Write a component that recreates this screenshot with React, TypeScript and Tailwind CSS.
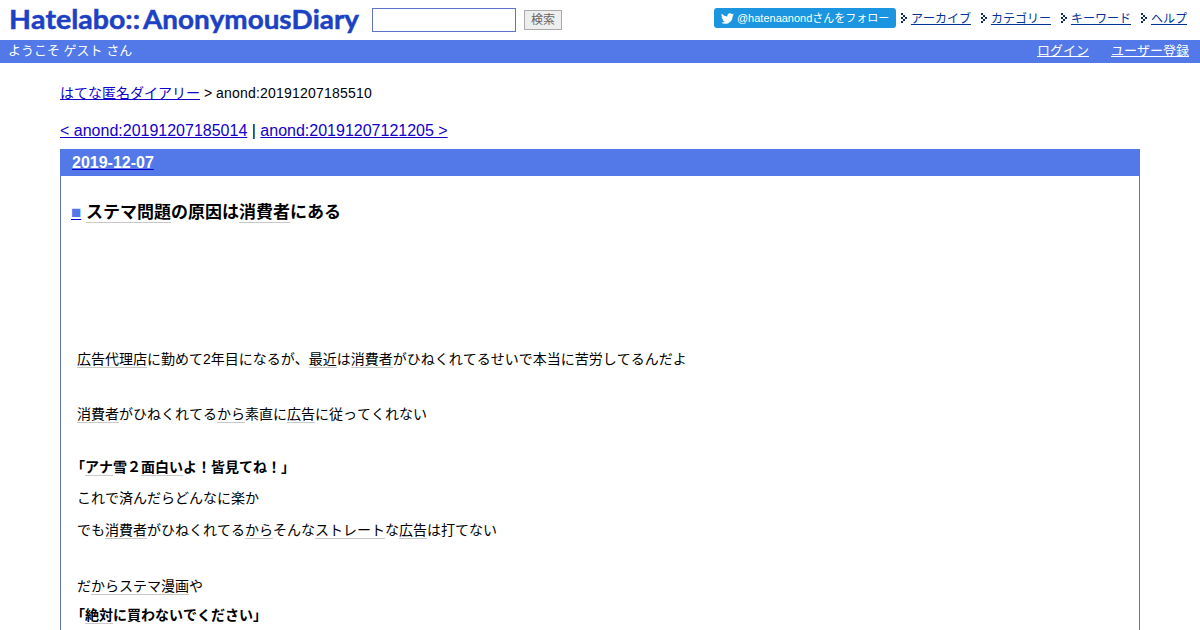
import type { ReactNode } from "react";

function K({ children }: { children: ReactNode }) {
  return <span className="border-b border-[#c8c8c8] inline-block h-[17px] leading-[17px]">{children}</span>;
}

function Arrow() {
  return (
    <svg width="6" height="10" viewBox="0 0 6 10" shapeRendering="crispEdges" fill="#0b2b66" className="mr-1 shrink-0">
      <path d="M0 0h2v2h-2zM2 2h2v2h-2zM4 4h2v2h-2zM2 6h2v2h-2zM0 8h2v2h-2zM0 4h2v2h-2z" />
    </svg>
  );
}

const menu = ["アーカイブ", "カテゴリー", "キーワード", "ヘルプ"];

function Header() {
  return (
    <header className="flex h-10 items-start">
      <svg width="372" height="40" className="shrink-0" fill="#1c41c4" stroke="#1c41c4" strokeWidth="0.5" fontFamily="Lato, sans-serif" fontWeight="700" fontSize="27">
        <text x="9" y="29" textLength="131" lengthAdjust="spacingAndGlyphs">Hatelabo::</text>
        <text x="143" y="29" textLength="216" lengthAdjust="spacingAndGlyphs">AnonymousDiary</text>
      </svg>
      <input aria-label="検索" className="mt-2 h-6 w-36 border border-[#5b74c4] bg-white outline-none" />
      <button className="mt-[10px] ml-2 h-5 w-[38px] border border-[#aaa] bg-[#eee] text-center text-[12px] leading-[17px] text-[#666]">検索</button>
      <a className="mt-2 ml-auto flex h-5 w-[182px] items-center rounded-[3px] bg-[#1b95e0] pl-[7px] text-[11px] whitespace-nowrap text-white">
        <svg width="13" height="13" viewBox="0 0 24 24" fill="currentColor" className="mr-[3px] shrink-0">
          <path d="M23.95 4.57a10 10 0 0 1-2.82.77 4.96 4.96 0 0 0 2.16-2.72c-.95.55-2 .95-3.12 1.18a4.92 4.92 0 0 0-8.38 4.48A13.93 13.93 0 0 1 1.64 3.16a4.92 4.92 0 0 0 1.52 6.57 4.9 4.9 0 0 1-2.23-.61v.06a4.92 4.92 0 0 0 3.95 4.83 5 5 0 0 1-2.21.08 4.94 4.94 0 0 0 4.6 3.42A9.87 9.87 0 0 1 0 19.54a13.99 13.99 0 0 0 7.55 2.21c9.05 0 14-7.5 14-13.98l-.02-.63a9.94 9.94 0 0 0 2.46-2.55z" />
        </svg>
        @hatenaanondさんをフォロー
      </a>
      <nav className="mt-2 mr-[13px] ml-[5px] flex h-5 gap-[10px] text-[12px] leading-[22px] text-[#003399]">
        {menu.map((m) => (
          <div key={m} className="flex h-5 items-center whitespace-nowrap">
            <Arrow />
            <a className="mt-px underline">{m}</a>
          </div>
        ))}
      </nav>
    </header>
  );
}

export default function App() {
  return (
    <div className="h-[630px] overflow-hidden bg-white font-['Liberation_Sans','Noto_Sans_CJK_JP',sans-serif] text-black [font-kerning:none]">
      <Header />
      <div className="flex h-[23px] items-start bg-[#5279e7] pr-[11px] pl-2 text-[13px] leading-[22px] text-white">
        <span>ようこそ ゲスト さん</span>
        <a className="mr-[22px] ml-auto underline">ログイン</a>
        <a className="underline">ユーザー登録</a>
      </div>
      <main className="px-[60px] pt-5">
        <p className="text-[14px] leading-5">
          <a className="text-[#1100cc] underline">はてな匿名ダイアリー</a> &gt; <span className="tracking-[0.21px]">anond:20191207185510</span>
        </p>
        <p className="mt-[18px] text-[16px] leading-5">
          <a className="text-[#1100cc] underline">&lt; anond:20191207185014</a> | <a className="text-[#1100cc] underline">anond:20191207121205 &gt;</a>
        </p>
        <article className="mt-2 h-[500px] border border-[#5f74c4] border-t-[#5279e7]">
          <h2 className="-mx-px h-[26px] bg-[#5279e7] pl-3 text-[16px] leading-[26px] font-bold">
            <a className="text-white underline decoration-[#0000cc]">2019-12-07</a>
          </h2>
          <h3 className="mt-[26px] h-[22px] pl-[10px] text-[17px] leading-[22px] font-bold">
            <a className="text-[#5279e7] underline decoration-[#0000cc]">■</a>{" "}
            <span className="inline-block h-[21px] border-b border-[#c8c8c8]">ステマ問題</span>の原因は<span className="inline-block h-[21px] border-b border-[#c8c8c8]">消費者</span>にある
          </h3>
          <div className="pt-[125px] pl-4 text-[14px] leading-5">
            <p className="h-5">
              <K>広告代理店</K>に勤めて2年目になるが、<K>最近</K>は<K>消費者</K>がひねくれてるせいで本当に苦労してるんだよ
            </p>
            <p className="mt-[35px] h-5">
              <K>消費者</K>がひねくれてる<K>から</K>素直に<K>広告</K>に従ってくれない
            </p>
            <h4 className="mt-[33px] -ml-[6px] h-5 font-bold">
              「<K>アナ</K>雪２<K>面白い</K>よ！皆見てね！」
            </h4>
            <p className="mt-[11px] h-5">これで済んだらどんなに楽か</p>
            <p className="mt-3 h-5">
              でも<K>消費者</K>がひねくれてる<K>から</K>そんな<K>ストレート</K>な<K>広告</K>は打てない
            </p>
            <p className="mt-9 h-5">
              だ<K>から</K><K>ステマ</K><K>漫画</K>や
            </p>
            <h4 className="mt-[9px] -ml-[6px] h-5 font-bold">
              「<K>絶対</K>に買わないでください」
            </h4>
          </div>
        </article>
      </main>
    </div>
  );
}
